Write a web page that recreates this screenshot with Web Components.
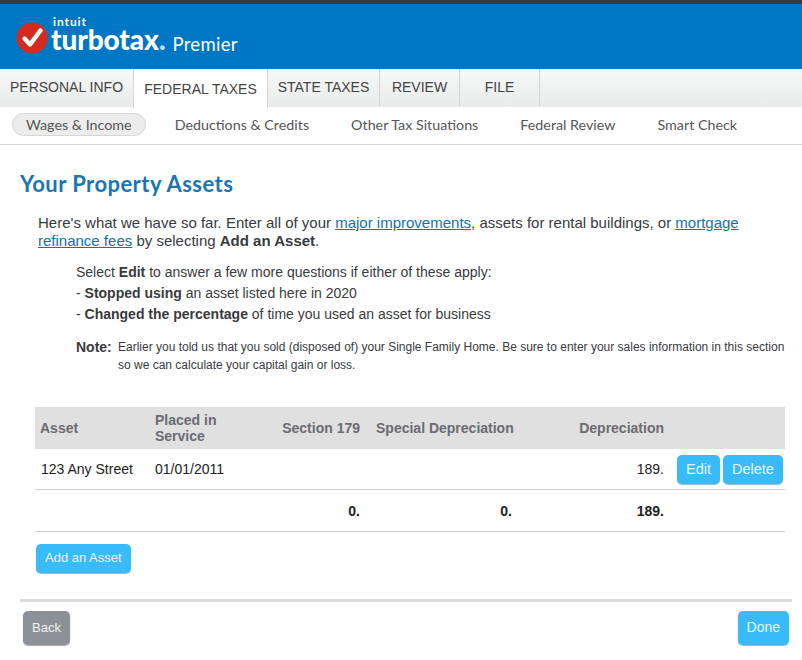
<!DOCTYPE html>
<html>
<head>
<meta charset="utf-8">
<title>Your Property Assets</title>
<style>
  html, body { margin: 0; padding: 0; background: #fff; }
  body { font-family: "Liberation Sans", Arial, sans-serif; width: 802px; height: 660px; overflow: hidden; }
</style>
</head>
<body>
<tt-header></tt-header>
<tt-tabs></tt-tabs>
<tt-subnav></tt-subnav>
<tt-page></tt-page>

<script>
// Blue brand bar
class TtHeader extends HTMLElement {
  constructor() {
    super();
    this.attachShadow({ mode: 'open' });
    this.shadowRoot.innerHTML = `
      <style>
        :host { display: block; height: 65px; border-top: 4px solid #393a3d; background: #0077c5; color: #fff; }
        .logo { display: flex; align-items: flex-end; height: 49px; padding: 0 0 0 16px; }
        svg { display: block; margin: 0 3px -1px 0; }
        .mark { display: flex; flex-direction: column; height: 37px; }
        .intuit { font: 700 12px/11px Lato, sans-serif; letter-spacing: .9px; height: 9px; margin-left: 2px; }
        .name { font: 900 28px/28px Lato, sans-serif; letter-spacing: -.1px; }
        .dot { color: #bfe0f5; }
        .edition { font: 400 18.5px/22px Lato, sans-serif; margin: 0 0 -2px 7px; letter-spacing: .3px; }
      </style>
      <div class="logo">
        <svg width="32" height="32" viewBox="0 0 32 32">
          <circle cx="16" cy="16" r="15.5" fill="#d52b1e"/>
          <path d="M8.5 16.5l5.5 6L24.5 8.5" fill="none" stroke="#fff" stroke-width="4.4" stroke-linecap="round" stroke-linejoin="round"/>
        </svg>
        <div class="mark">
          <div class="intuit">intuit</div>
          <div class="name">turbotax<span class="dot">.</span></div>
        </div>
        <div class="edition">Premier</div>
      </div>
    `;
  }
}
customElements.define('tt-header', TtHeader);

// Main section tabs
class TtTabs extends HTMLElement {
  constructor() {
    super();
    this.attachShadow({ mode: 'open' });
    const tabs = [
      ['PERSONAL INFO', 134], ['FEDERAL TAXES', 134, true], ['STATE TAXES', 112],
      ['REVIEW', 80], ['FILE', 80]
    ];
    this.shadowRoot.innerHTML = `
      <style>
        :host { display: flex; height: 38px; background: linear-gradient(#f7f8f8, #e9eaea); font: 14px "Liberation Sans", Arial, sans-serif; color: #444; }
        .tab { box-sizing: border-box; display: flex; align-items: center; justify-content: center; border-right: 1px solid #d2d3d3; padding-bottom: 2px; }
        .tab.active { background: #fff; height: 39px; padding-bottom: 0; border-left: 1px solid #d8d8d8; margin-left: -1px; }
      </style>
      ${tabs.map(([label, width, active]) => `
        <div class="tab ${active ? 'active' : ''}" style="width:${active ? width + 1 : width}px">${label}</div>
      `).join('')}
    `;
  }
}
customElements.define('tt-tabs', TtTabs);

// Secondary nav under the tabs
class TtSubnav extends HTMLElement {
  constructor() {
    super();
    this.attachShadow({ mode: 'open' });
    const items = ['Wages & Income', 'Deductions & Credits', 'Other Tax Situations', 'Federal Review', 'Smart Check'];
    this.shadowRoot.innerHTML = `
      <style>
        :host { display: flex; box-sizing: border-box; height: 38px; align-items: center; padding: 0 0 2px 12px; gap: 42px; border-bottom: 1px solid #d8d8d8; font: 14.3px Lato, sans-serif; color: #555; }
        .item.current { box-sizing: border-box; height: 23px; line-height: 21px; padding: 0 13px; background: #ececec; border: 1px solid #d6d6d6; border-radius: 12px; margin-right: -13px; }
      </style>
      ${items.map((item, index) => `<div class="item ${index === 0 ? 'current' : ''}">${item.replace('&', '&amp;')}</div>`).join('')}
    `;
  }
}
customElements.define('tt-subnav', TtSubnav);

// Rounded blue or grey action button
class TtButton extends HTMLElement {
  constructor() {
    super();
    this.attachShadow({ mode: 'open' });
    this.shadowRoot.innerHTML = `
      <style>
        :host { display: inline-flex; box-sizing: border-box; align-items: center; justify-content: center; height: 29px; padding: 0 9px 2px; background: #38bbf6; color: #e6f6fe; font: 14px "Liberation Sans", Arial, sans-serif; border-radius: 5px; box-shadow: 0 1px 1px #8fb9cc; }
        :host([grey]) { background: #8d9096; box-shadow: 0 1px 1px #a9abae; color: #f0f0f2; }
        :host([large]) { height: 34px; }
        :host([small]) { font-size: 13px; }
        :host([action]) { font-size: 14.5px; }
      </style>
      <slot></slot>
    `;
  }
}
customElements.define('tt-button', TtButton);

// Asset table
class TtAssets extends HTMLElement {
  constructor() {
    super();
    this.attachShadow({ mode: 'open' });
    this.shadowRoot.innerHTML = `
      <style>
        :host { display: block; width: 750px; font: 14px "Liberation Sans", Arial, sans-serif; color: #222; }
        .row { display: grid; grid-template-columns: 115px 100px 110px 152px 152px 121px; align-items: center; border-bottom: 1px solid #cfd0d0; box-sizing: border-box; }
        .head { height: 42px; background: #e0e0e0; border: 0; color: #6b6c72; font-weight: 700; line-height: 16px; }
        .body { height: 41px; }
        .total { height: 42px; font-weight: 700; }
        .first { padding-left: 5px; }
        .asset { padding-left: 6px; }
        .date { padding-left: 5px; }
        .right { text-align: right; }
        .special { text-align: left; padding-left: 16px; white-space: nowrap; }
        .actions { display: flex; gap: 3px; padding-left: 13px; margin-top: 1px; }
        .wrap { padding-left: 5px; }
      </style>
      <div class="row head">
        <div class="first">Asset</div>
        <div class="wrap">Placed in<br>Service</div>
        <div class="right">Section 179</div>
        <div class="special">Special Depreciation</div>
        <div class="right">Depreciation</div>
        <div></div>
      </div>
      <div class="row body">
        <div class="asset">123 Any Street</div>
        <div class="date">01/01/2011</div>
        <div></div>
        <div></div>
        <div class="right">189.</div>
        <div class="actions"><tt-button action>Edit</tt-button><tt-button action>Delete</tt-button></div>
      </div>
      <div class="row total">
        <div></div>
        <div></div>
        <div class="right">0.</div>
        <div class="right">0.</div>
        <div class="right">189.</div>
        <div></div>
      </div>
    `;
  }
}
customElements.define('tt-assets', TtAssets);

// Page body: heading, intro copy, table, footer buttons
class TtPage extends HTMLElement {
  constructor() {
    super();
    this.attachShadow({ mode: 'open' });
    this.shadowRoot.innerHTML = `
      <style>
        :host { display: block; font: 14px "Liberation Sans", Arial, sans-serif; color: #393a3d; }
        h1 { margin: 0; padding: 25px 0 0 20px; height: 32px; font: 700 22px/27px Lato, sans-serif; color: #1a75b5; letter-spacing: .45px; }
        .intro { margin: 0; padding: 12px 30px 0 38px; font-size: 15px; line-height: 18px; }
        a { color: #0f74a8; text-decoration: underline; }
        .select { margin: 0; padding: 12px 0 0 76px; line-height: 21px; }
        .note { display: flex; padding: 13px 16px 0 76px; }
        .note b { width: 42px; font-size: 14px; line-height: 18px; flex: none; }
        .note span { font-size: 12px; line-height: 18px; }
        tt-assets { margin: 33px 0 0 35px; }
        .add { padding: 12px 0 0 36px; height: 42px; }
        .foot { display: flex; justify-content: space-between; margin: 13px 10px 0 20px; padding: 9px 3px 0 3px; border-top: 3px solid #dcdcdc; }
      </style>
      <h1>Your Property Assets</h1>
      <p class="intro">Here's what we have so far. Enter all of your <a>major improvements</a>, assets for rental buildings, or <a>mortgage refinance fees</a> by selecting <b>Add an Asset</b>.</p>
      <p class="select">Select <b>Edit</b> to answer a few more questions if either of these apply:<br>- <b>Stopped using</b> an asset listed here in 2020<br>- <b>Changed the percentage</b> of time you used an asset for business</p>
      <div class="note"><b>Note:</b><span>Earlier you told us that you sold (disposed of) your Single Family Home. Be sure to enter your sales information in this section so we can calculate your capital gain or loss.</span></div>
      <tt-assets></tt-assets>
      <div class="add"><tt-button small>Add an Asset</tt-button></div>
      <div class="foot"><tt-button grey large small>Back</tt-button><tt-button large>Done</tt-button></div>
    `;
  }
}
customElements.define('tt-page', TtPage);
</script>
</body>
</html>
